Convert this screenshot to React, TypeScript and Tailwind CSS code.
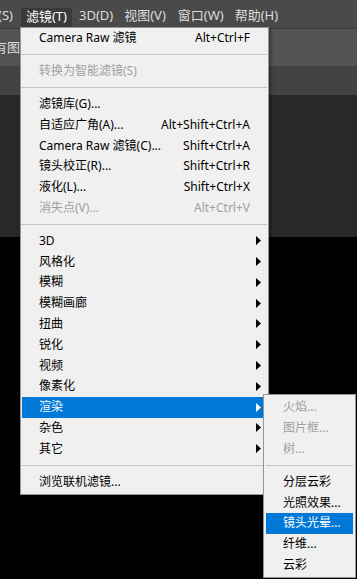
import React from 'react';

type Item =
  | { sep: true }
  | { sep?: false; label: string; shortcut?: string; arrow?: boolean; disabled?: boolean; active?: boolean };

const mainItems: Item[] = [
  { label: 'Camera Raw 滤镜', shortcut: 'Alt+Ctrl+F' },
  { sep: true },
  { label: '转换为智能滤镜(S)', disabled: true },
  { sep: true },
  { label: '滤镜库(G)...' },
  { label: '自适应广角(A)...', shortcut: 'Alt+Shift+Ctrl+A' },
  { label: 'Camera Raw 滤镜(C)...', shortcut: 'Shift+Ctrl+A' },
  { label: '镜头校正(R)...', shortcut: 'Shift+Ctrl+R' },
  { label: '液化(L)...', shortcut: 'Shift+Ctrl+X' },
  { label: '消失点(V)...', shortcut: 'Alt+Ctrl+V', disabled: true },
  { sep: true },
  { label: '3D', arrow: true },
  { label: '风格化', arrow: true },
  { label: '模糊', arrow: true },
  { label: '模糊画廊', arrow: true },
  { label: '扭曲', arrow: true },
  { label: '锐化', arrow: true },
  { label: '视频', arrow: true },
  { label: '像素化', arrow: true },
  { label: '渲染', arrow: true, active: true },
  { label: '杂色', arrow: true },
  { label: '其它', arrow: true },
  { sep: true },
  { label: '浏览联机滤镜...' },
];

const subItems: Item[] = [
  { label: '火焰...', disabled: true },
  { label: '图片框...', disabled: true },
  { label: '树...', disabled: true },
  { sep: true },
  { label: '分层云彩' },
  { label: '光照效果...' },
  { label: '镜头光晕...', active: true },
  { label: '纤维...' },
  { label: '云彩' },
];

const Arrow = ({ white }: { white?: boolean }) => (
  <svg width="5" height="9" viewBox="0 0 5 9" className="shrink-0">
    <polygon points="0,0 5,4.5 0,9" fill={white ? '#ffffff' : '#000000'} />
  </svg>
);

const font = { fontFamily: '"Noto Sans", "Noto Sans CJK SC", sans-serif' };

export default function App() {
  return (
    <div className="relative w-[357px] h-[579px] overflow-hidden bg-black text-[12px]" style={font}>
      {/* menu bar */}
      <div className="h-[29px] bg-[#4a4a4a] flex items-start text-[13px] text-[#dcdcdc] border-b border-[#3a3a3a]">
        <span className="ml-[-2px] mt-[6px] leading-[18px]">(S)</span>
        <span className="ml-[8px] mt-[8px] h-[21px] px-[5px] bg-[#3a3a3a] text-white leading-[17px]">滤镜(T)</span>
        <span className="ml-[7px] mt-[6px] leading-[18px]">3D(D)</span>
        <span className="ml-[11px] mt-[6px] leading-[18px]">视图(V)</span>
        <span className="ml-[12px] mt-[6px] leading-[18px]">窗口(W)</span>
        <span className="ml-[11px] mt-[6px] leading-[18px]">帮助(H)</span>
      </div>
      {/* options bar */}
      <div className="h-[37px] bg-[#535353] flex items-center text-[13px] text-[#dcdcdc]">
        <span className="ml-[-6px]">有图层</span>
      </div>
      {/* tab bar */}
      <div className="h-[29px] bg-[#424242]" />
      {/* panel */}
      <div className="h-[142px] bg-[#282828]" />

      {/* filter menu */}
      <div className="absolute left-[20px] top-[27px] w-[249px] bg-[#f0f0f0] border border-[#979797] pt-0 pb-[2px] shadow-[2px_2px_3px_rgba(0,0,0,0.35)]">
        {mainItems.map((it, i) =>
          it.sep ? (
            <div key={i} className="h-[12px] flex items-center mr-[1px]">
              <div className="w-full border-t border-[#c4c4c4]" />
            </div>
          ) : (
            <div
              key={i}
              className={`h-[20.8px] mx-[1px] flex items-center justify-between pl-[17px] ${
                it.arrow ? 'pr-[6px]' : 'pr-[17px]'
              } ${it.active ? 'bg-[#0078d7] text-white' : it.disabled ? 'text-[#a0a0a0]' : 'text-black'}`}
            >
              <span className="whitespace-nowrap">{it.label}</span>
              {it.shortcut && <span className="whitespace-nowrap">{it.shortcut}</span>}
              {it.arrow && <Arrow white={it.active} />}
            </div>
          )
        )}
      </div>

      {/* render submenu */}
      <div className="absolute left-[263px] top-[394px] w-[93px] bg-[#f0f0f0] border border-[#979797] pt-[2px] pb-[2px] shadow-[2px_2px_3px_rgba(0,0,0,0.35)]">
        {subItems.map((it, i) =>
          it.sep ? (
            <div key={i} className="h-[12px] flex items-center mx-[2px]">
              <div className="w-full border-t border-[#c4c4c4]" />
            </div>
          ) : (
            <div
              key={i}
              className={`h-[20.8px] mx-[2px] flex items-center pl-[17px] ${
                it.active ? 'bg-[#0078d7] text-white' : it.disabled ? 'text-[#a0a0a0]' : 'text-black'
              }`}
            >
              <span className="whitespace-nowrap">{it.label}</span>
            </div>
          )
        )}
      </div>
    </div>
  );
}
